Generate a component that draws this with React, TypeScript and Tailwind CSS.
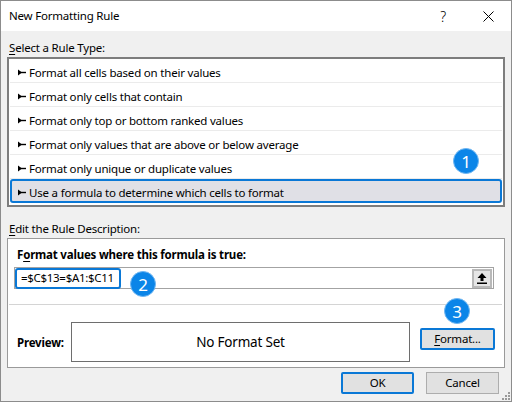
import React from "react";

const rules = [
  "Format all cells based on their values",
  "Format only cells that contain",
  "Format only top or bottom ranked values",
  "Format only values that are above or below average",
  "Format only unique or duplicate values",
  "Use a formula to determine which cells to format",
];

function Pointer() {
  return (
    <svg width="8" height="7" viewBox="0 0 8 7" className="mr-[3px] shrink-0">
      <path d="M0 0.5 L4 3.5 L0 6.5 Z" fill="#000" />
      <rect x="0" y="2.8" width="8" height="1.4" fill="#000" />
    </svg>
  );
}

function Badge({ n, className }: { n: number; className: string }) {
  return (
    <div
      className={`absolute flex h-[26px] w-[26px] items-center justify-center rounded-full border border-[#6fb6f2] bg-[#0b85e8] text-[17px] leading-none tracking-normal text-white ${className}`}
    >
      {n}
    </div>
  );
}

export default function App() {
  return (
    <div className="relative flex h-[402px] w-[512px] flex-col border border-[#8c8c8c] bg-[#f0f0f0] font-['Noto_Sans',sans-serif] text-[11.5px] tracking-[-0.2px] text-black">
      {/* Title bar */}
      <div className="flex h-[30px] shrink-0 items-center bg-white pl-[8px]">
        <span className="text-[11.5px]">New Formatting Rule</span>
        <span className="ml-auto mr-[37px] text-[14px] font-light">?</span>
        <svg width="11" height="11" viewBox="0 0 11 11" className="mr-[17px]">
          <path d="M0.5 0.5 L10.5 10.5 M10.5 0.5 L0.5 10.5" stroke="#000" strokeWidth="1" />
        </svg>
      </div>

      <div className="flex flex-1 flex-col px-[6px]">
        <div className="mt-[9px] h-[16px] pl-[2px] leading-[16px]">
          <u className="underline-offset-2">S</u>elect a Rule Type:
        </div>

        {/* Rule list */}
        <div className="mt-[1px] flex h-[150px] flex-col border-2 border-[#7d7d7d] bg-white">
          {rules.map((r, i) =>
            i === rules.length - 1 ? (
              <div
                key={r}
                className="mx-[1px] flex h-[24px] items-center rounded-[3px] border-2 border-[#0a78d6] bg-[#e0e0e6] pl-[6px] pt-[3px]"
              >
                <Pointer />
                {r}
              </div>
            ) : (
              <div
                key={r}
                className="mx-[1px] flex h-[24px] items-center border-b border-[#ebebeb] pl-[8px] pt-[4px]"
              >
                <Pointer />
                {r}
              </div>
            )
          )}
        </div>

        <div className="mt-[14px] h-[16px] pl-[2px] leading-[16px]">
          <u className="underline-offset-2">E</u>dit the Rule Description:
        </div>

        {/* Description box */}
        <div className="mt-[1px] flex h-[130px] flex-col border border-[#9a9a9a] bg-white">
          <div className="mt-[8px] h-[16px] pl-[9px] font-bold leading-[16px]">
            F<u className="underline-offset-2">o</u>rmat values where this formula is true:
          </div>
          <div className="ml-[6px] mr-[10px] mt-[4px] flex h-[22px] items-center border border-[#a3a3a3]">
            <span className="flex h-[21px] items-center whitespace-nowrap rounded-[3px] border-2 border-[#0a78d6] pl-[4px] pr-[5px] text-[11.5px] tracking-[-0.3px]">
              =$C$13=$A1:$C11
            </span>
            <div className="ml-auto mr-[1px] flex h-[19px] w-[20px] items-center justify-center border-2 border-[#b9b9b9] bg-[#e6e6e6]">
              <svg width="10" height="11" viewBox="0 0 10 11">
                <path d="M5 0 L9.5 5 L6.5 5 L6.5 8 L3.5 8 L3.5 5 L0.5 5 Z" fill="#000" />
                <rect x="0" y="9.5" width="10" height="1.5" fill="#000" />
              </svg>
            </div>
          </div>
          <div className="ml-[1px] mr-[2px] mt-[15px] h-[1px] bg-[#d4d4d4]" />
          <div className="mt-[17px] flex items-start">
            <span className="mt-[12px] w-[63px] pl-[9px] font-bold">Preview:</span>
            <div className="flex h-[40px] w-[339px] items-center justify-center border border-[#6e6e6e] text-[13.5px] tracking-[-0.2px]">
              No Format Set
            </div>
            <button className="ml-[10px] mt-[6px] flex h-[22px] w-[75px] items-center justify-center rounded-[2px] border-2 border-[#0a78d6] bg-[#e1e1e1]">
              <u className="underline-offset-2">F</u>ormat...
            </button>
          </div>
        </div>

        {/* Buttons */}
        <div className="mt-[4px] flex justify-end gap-[12px] pr-[6px]">
          <button className="flex h-[22px] w-[73px] items-center justify-center rounded-[2px] border-2 border-[#0a78d6] bg-[#e1e1e1]">
            OK
          </button>
          <button className="flex h-[22px] w-[73px] items-center justify-center border border-[#adadad] bg-[#e1e1e1]">
            Cancel
          </button>
        </div>
      </div>

      <svg width="10" height="10" viewBox="0 0 10 10" className="absolute bottom-[1px] right-[1px]">
        <rect x="8" y="2" width="2" height="2" fill="#9a9a9a" />
        <rect x="5" y="5" width="2" height="2" fill="#9a9a9a" />
        <rect x="8" y="5" width="2" height="2" fill="#9a9a9a" />
        <rect x="2" y="8" width="2" height="2" fill="#9a9a9a" />
        <rect x="5" y="8" width="2" height="2" fill="#9a9a9a" />
        <rect x="8" y="8" width="2" height="2" fill="#9a9a9a" />
      </svg>

      <Badge n={1} className="left-[452px] top-[147px]" />
      <Badge n={2} className="left-[129px] top-[270px]" />
      <Badge n={3} className="left-[443px] top-[297px]" />
    </div>
  );
}
